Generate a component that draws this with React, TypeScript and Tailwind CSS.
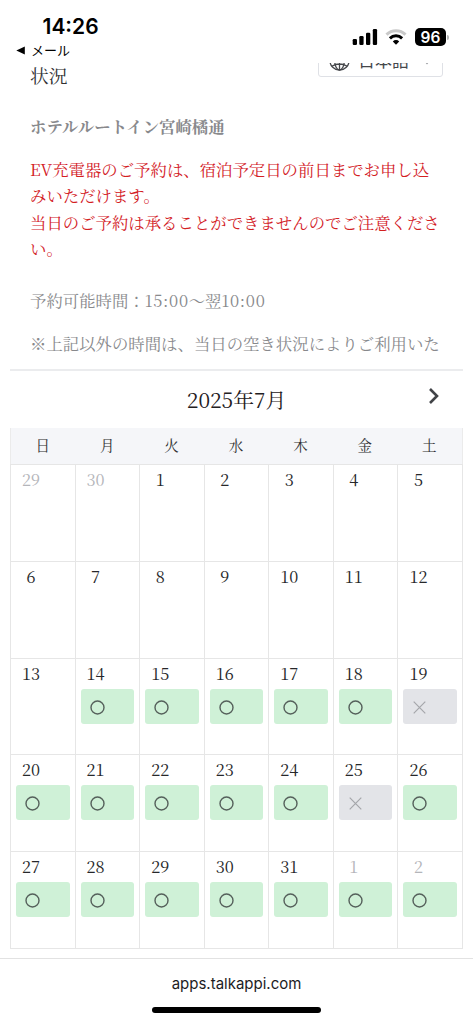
import clsx from "clsx";

const WEEKDAYS = ["日", "月", "火", "水", "木", "金", "土"];

type Status = "open" | "full" | null;
type Day = { label: number; muted: boolean; status: Status };

// June 29 - August 2
const DAYS: Day[] = Array.from({ length: 35 }, (_, i) => {
  const n = i - 1;
  const label = n < 1 ? n + 30 : n > 31 ? n - 31 : n;
  const status: Status = n < 14 ? null : n === 19 || n === 25 ? "full" : "open";
  return { label, muted: n < 1 || n > 31, status };
});

const StatusBar = () => (
  <header className="flex h-[63px] shrink-0 justify-between bg-white font-['Inter','Noto_Sans_CJK_JP',sans-serif] text-black">
    <div className="pl-4 pt-[15px]">
      <div className="pl-[26.5px] text-[21px] font-semibold leading-6">14:26</div>
      <div className="mt-[2px] flex items-center gap-[6px]">
        <svg width="9" height="9" viewBox="0 0 9 9">
          <path d="M0.3 4.5 8.8 0.4v8.2z" />
        </svg>
        <span className="font-['Noto_Sans_CJK_JP',sans-serif] text-[13px] leading-[18px]">メール</span>
      </div>
    </div>

    <div className="flex items-start pr-6 pt-[28px]">
      <svg width="26" height="18" viewBox="0 0 26 18" className="mr-[7px]">
        <rect x="0.7" y="11" width="4.3" height="6" rx="1.2" />
        <rect x="7.3" y="8" width="4.3" height="9" rx="1.2" />
        <rect x="14" y="4.7" width="4.3" height="12.3" rx="1.2" />
        <rect x="20.8" y="1" width="4.3" height="16" rx="1.2" />
      </svg>
      <svg width="22" height="18" viewBox="0 0 22 18" className="mr-[8px]" fill="none">
        <path d="M1.5 6.6a13.6 13.6 0 0 1 19 0" stroke="#c9c9c9" strokeWidth="3" />
        <path d="M4.9 10.3a8.8 8.8 0 0 1 12.2 0" stroke="#000" strokeWidth="3" />
        <path d="M11 16.8 7.8 13.4a4.6 4.6 0 0 1 6.4 0z" fill="#000" />
      </svg>
      <div className="flex h-[18px] w-[31px] items-center justify-center rounded-[5px] bg-black pt-px text-[15.5px] font-semibold leading-none text-white">
        96
      </div>
      <div className="ml-[1px] mt-[7px] h-[5px] w-[2px] rounded-r-full bg-[#b5b5b5]" />
    </div>
  </header>
);

const LanguageButton = () => (
  <div className="-mt-[21px] flex h-[35px] w-[125px] items-center rounded-[3px] border border-[#dfe1e6] pl-[10px] font-['Noto_Sans_CJK_JP',sans-serif] text-[#45474b]">
    <svg width="21" height="21" viewBox="0 0 21 21" fill="none" stroke="currentColor" strokeWidth="1.3" className="mt-[2px]">
      <circle cx="10.5" cy="10.5" r="9.6" />
      <ellipse cx="10.5" cy="10.5" rx="4.8" ry="9.6" />
      <path d="M10.5 1v19M1 10.5h19M2.8 4.8c4.6 2.6 10.8 2.6 15.4 0M2.8 16.2c4.6-2.6 10.8-2.6 15.4 0" />
    </svg>
    <span className="ml-[8px] text-[17px] leading-none">日本語</span>
    <svg width="10" height="7" viewBox="0 0 10 7" className="ml-[13px] mt-[3px]" fill="none" stroke="#9a9ca0" strokeWidth="1.2">
      <path d="M1 1l4 4.5L9 1" />
    </svg>
  </div>
);

const Intro = () => (
  <section className="mx-[10px] h-[308px] shrink-0 overflow-hidden border-b-2 border-[#ebecee] pl-[20px] text-[16.4px] leading-[26.6px] text-[#88898c]">
    <div className="flex h-[50px] justify-between pr-5">
      <h1 className="text-[18.7px] leading-[23px] text-[#303133]">状況</h1>
      <LanguageButton />
    </div>
    <p className="font-bold">ホテルルートイン宮崎橘通</p>
    <p className="mt-[16px] whitespace-nowrap text-[#d3201f]">
      EV充電器のご予約は、宿泊予定日の前日までお申し込
      <br />
      みいただけます。
      <br />
      当日のご予約は承ることができませんのでご注意くださ
      <br />
      い。
    </p>
    <p className="mt-[25px]">
      予約可能時間：<span className="tracking-[0.7px]">15:00</span>〜翌
      <span className="tracking-[0.7px]">10:00</span>
    </p>
    <p className="mt-[16px] whitespace-nowrap">※上記以外の時間は、当日の空き状況によりご利用いた</p>
  </section>
);

const Slot = ({ status }: { status: "open" | "full" }) => (
  <div
    className={clsx(
      "mt-[6px] flex h-[35px] items-center rounded-[3px] pl-[9px]",
      status === "open" ? "bg-[#cff1d7]" : "bg-[#e3e4e8]"
    )}
  >
    {status === "open" ? (
      <svg width="15" height="15" viewBox="0 0 15 15" fill="none" stroke="#55605b" strokeWidth="1.4" className="mt-[2px]">
        <circle cx="7.5" cy="7.5" r="6.5" />
      </svg>
    ) : (
      <svg width="15" height="15" viewBox="0 0 15 15" fill="none" stroke="#a5a6aa" strokeWidth="1.2" className="mt-[2px]">
        <path d="M1.7 1.7l11.6 11.6M13.3 1.7L1.7 13.3" />
      </svg>
    )}
  </div>
);

const Calendar = () => (
  <section className="mx-[10px] flex shrink-0 flex-col">
    <div className="grid h-[57px] grid-cols-[1fr_auto_1fr] items-center">
      <h2 className="col-start-2 text-[20.8px] leading-none text-[#1f2022]">2025年7月</h2>
      <svg width="12" height="18" viewBox="0 0 12 18" fill="none" stroke="#414347" strokeWidth="2.6" className="mb-[7px] mr-[23px] justify-self-end">
        <path d="M2 2l7 7-7 7" />
      </svg>
    </div>
    <div className="grid h-[36px] grid-cols-7 border-x border-[#ebebeb] bg-[#f5f6f9]">
      {WEEKDAYS.map((w) => (
        <div key={w} className="pr-px text-center text-[14.5px] leading-[34px] text-[#303133]">
          {w}
        </div>
      ))}
    </div>
    <div className="grid h-[485px] grid-cols-7 grid-rows-5 border-l border-t border-[#e6e6e6]">
      {DAYS.map((d, i) => (
        <div key={i} className="border-b border-r border-[#e6e6e6] px-[5px] pt-[4px]">
          <div
            className={clsx(
              "w-[30px] text-center text-[16.4px] leading-5",
              d.muted ? "text-[#b4b5ba]" : "text-[#26272a]"
            )}
          >
            {d.label}
          </div>
          {d.status && <Slot status={d.status} />}
        </div>
      ))}
    </div>
  </section>
);

const AddressBar = () => (
  <footer className="mt-[9px] flex grow flex-col items-center border-t border-[#e2e2e2] pt-[14px] font-['Inter',sans-serif]">
    <span className="text-[15px] leading-[22px] text-[#1c1c1e]">apps.talkappi.com</span>
    <div className="mt-[12px] h-[6px] w-[169px] rounded-full bg-black" />
  </footer>
);

export default function App() {
  return (
    <div className="flex h-[1024px] w-full flex-col overflow-hidden bg-white font-['Noto_Serif_CJK_JP','Liberation_Serif','Noto_Sans_CJK_JP',serif]">
      <StatusBar />
      <Intro />
      <Calendar />
      <AddressBar />
    </div>
  );
}
